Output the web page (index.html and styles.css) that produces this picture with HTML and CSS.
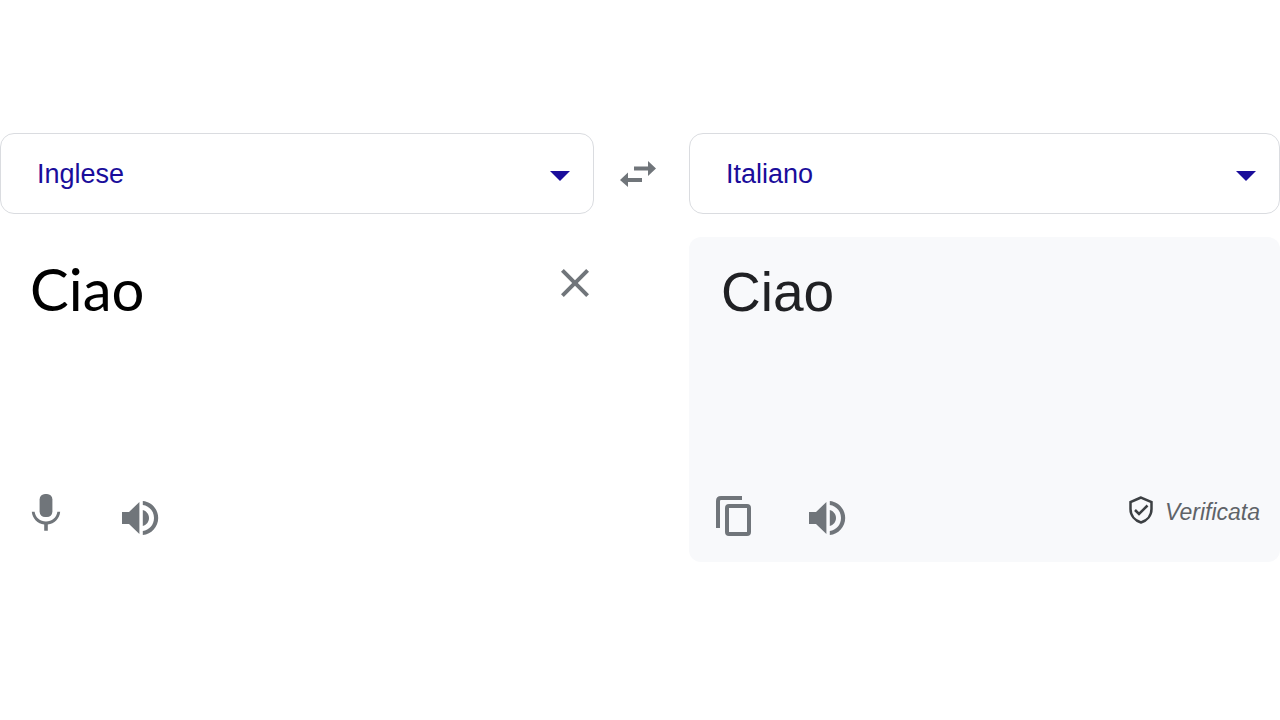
FILE: index.html
```html
<!DOCTYPE html>
<html lang="it">
<head>
    <meta charset="UTF-8">
    <title>Traduttore</title>
    <link rel="stylesheet" href="styles.css">
</head>
<body>
<main class="translator">
    <div class="lang">
        <select class="lang-select" aria-label="Lingua di partenza">
            <option>Inglese</option>
            <option>Italiano</option>
        </select>
        <svg class="caret" viewBox="0 0 20 10"><path d="M0 0h20L10 10z"/></svg>
    </div>
    <button class="icon-btn swap" type="button" aria-label="Inverti le lingue">
        <svg width="36" height="26" viewBox="0 0 36 26"><path d="M14 5.500h14V0l8 7.500-8 7.500V9.500H14zM22 17H8v-5.500L0 19l8 7v-5h14z"/></svg>
    </button>
    <div class="lang">
        <select class="lang-select" aria-label="Lingua di arrivo">
            <option>Italiano</option>
            <option>Inglese</option>
        </select>
        <svg class="caret" viewBox="0 0 20 10"><path d="M0 0h20L10 10z"/></svg>
    </div>

    <section class="panel source">
        <div class="panel-top">
            <textarea class="text source-text" rows="1" aria-label="Testo da tradurre" spellcheck="false">Ciao</textarea>
            <button class="icon-btn clear" type="button" aria-label="Cancella">
                <svg width="48" height="48" viewBox="0 0 24 24"><path d="M19 6.410L17.590 5 12 10.590 6.410 5 5 6.410 10.590 12 5 17.590 6.410 19 12 13.410 17.590 19 19 17.590 13.410 12z"/></svg>
            </button>
        </div>
        <div class="tools">
            <button class="icon-btn mic" type="button" aria-label="Parla">
                <svg width="48" height="48" viewBox="0 0 24 24"><rect x="8.800" y="2" width="6.400" height="11.500" rx="2.700"/><path d="M17.700 10.900c-.4 2.900-2.800 4.900-5.700 4.900s-5.300-2-5.700-4.900H4.900c.3 3.400 2.900 6 6.200 6.400v3.100h1.800v-3.100c3.300-.4 5.900-3 6.200-6.400z"/></svg>
            </button>
            <button class="icon-btn" type="button" aria-label="Ascolta">
                <svg width="48" height="48" viewBox="0 0 24 24"><path d="M3 9v6h3.500l5.200 5V4L6.500 9zM13.400 8v8c1.800-.5 3.100-2 3.100-4s-1.300-3.500-3.100-4zM13.400 3.500v2c3.200.4 5.600 3.100 5.600 6.500s-2.400 6.100-5.600 6.500v2c4.300-.4 7.700-4 7.700-8.500s-3.400-8.100-7.700-8.500z"/></svg>
            </button>
        </div>
    </section>

    <section class="panel target">
        <div class="panel-top">
            <div class="text target-text">Ciao</div>
        </div>
        <div class="tools">
            <button class="icon-btn copy" type="button" aria-label="Copia">
                <svg width="36" height="40" viewBox="0 0 36 40"><path class="line" d="M2 32V5q0-3 3-3h21"/><rect class="line" x="11" y="10" width="22" height="28" rx="2"/></svg>
            </button>
            <button class="icon-btn" type="button" aria-label="Ascolta la traduzione">
                <svg width="48" height="48" viewBox="0 0 24 24"><path d="M3 9v6h3.500l5.200 5V4L6.500 9zM13.400 8v8c1.800-.5 3.100-2 3.100-4s-1.300-3.500-3.100-4zM13.400 3.500v2c3.200.4 5.600 3.100 5.600 6.500s-2.400 6.100-5.600 6.500v2c4.300-.4 7.700-4 7.700-8.500s-3.400-8.100-7.700-8.500z"/></svg>
            </button>
            <span class="verified">
                <svg width="24" height="28" viewBox="0 0 24 28"><path d="M12 1.500L1.500 6v7c0 6.500 4.400 11.600 10.500 13.500 6.100-1.900 10.500-7 10.500-13.500V6z"/><path d="M6 14l4 4 8.500-8.500"/></svg>
                Verificata
            </span>
        </div>
    </section>
</main>
</body>
</html>
```
FILE: styles.css
```css
* {
    margin: 0;
    padding: 0;
    box-sizing: border-box;
}

body {
    background: #fff;
    font-family: "Liberation Sans", Arial, sans-serif;
}

svg {
    display: block;
}

.translator {
    display: grid;
    grid-template-columns: 1.005fr 95px 1fr;
    row-gap: 23px;
    padding-top: 133px;
}

/* language selectors */
.lang {
    position: relative;
}
.lang-select {
    display: block;
    width: 100%;
    height: 81px;
    padding: 0 60px 0 36px;
    border: 1px solid #dadce0;
    border-radius: 14px;
    background: #fff;
    color: #1a0d9b;
    font-family: inherit;
    font-size: 27px;
    appearance: none;
    cursor: pointer;
}
.caret {
    position: absolute;
    top: 38px;
    right: 24px;
    width: 20px;
    height: 10px;
    fill: #1a0d9b;
    pointer-events: none;
}

.icon-btn {
    flex: none;
    border: none;
    background: none;
    cursor: pointer;
}
.icon-btn svg {
    fill: #70757a;
}
.swap {
    place-self: center;
    padding-right: 6px;
}

/* text panels */
.panel {
    display: flex;
    flex-direction: column;
    justify-content: space-between;
    min-height: 325px;
    border-radius: 12px;
}
.source {
    grid-column: 1 / 3;
    padding: 20px 90px 20px 22px;
}
.target {
    padding: 23px 20px 20px 24px;
    background: #f8f9fb;
}
.panel-top {
    display: flex;
    align-items: flex-start;
}
.text {
    flex: 1;
    min-width: 0;
    padding-left: 8px;
    line-height: 64px;
}
.source-text {
    height: 64px;
    border: none;
    outline: none;
    background: none;
    resize: none;
    overflow: hidden;
    color: #000;
    font-family: Lato, "Liberation Sans", sans-serif;
    font-size: 58px;
}
.clear {
    padding-top: 2px;
}
.target-text {
    color: #202124;
    font-size: 55px;
}

.tools {
    display: flex;
    align-items: center;
    height: 48px;
}
.mic {
    margin-right: 46px;
    padding-bottom: 8px;
}
.copy {
    margin: 0 51px 0 3px;
    padding-bottom: 4px;
}
.copy .line {
    fill: none;
    stroke: #70757a;
    stroke-width: 4;
}
.verified {
    display: flex;
    align-items: center;
    gap: 12px;
    margin-left: auto;
    padding-bottom: 12px;
    color: #5f6368;
    font-size: 23px;
    font-style: italic;
}
.verified svg {
    margin-bottom: 4px;
    fill: none;
    stroke: #3c4043;
    stroke-width: 2.5;
}
```
